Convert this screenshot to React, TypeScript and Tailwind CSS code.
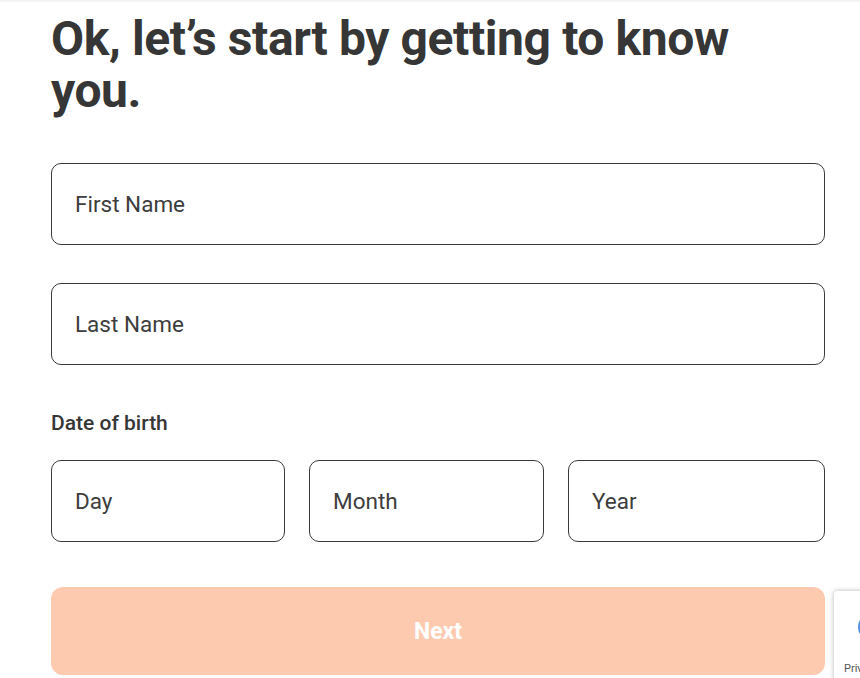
import React from "react";

function Field({ label, className = "" }: { label: string; className?: string }) {
  return (
    <div
      className={`h-[82px] rounded-[10px] border border-[#3a3a3a] bg-white flex items-center pl-[23px] ${className}`}
    >
      <span className="text-[22.5px] text-[#3d3d3d] leading-none">{label}</span>
    </div>
  );
}

export default function App() {
  return (
    <div
      className="relative w-[860px] h-[678px] overflow-hidden bg-white"
      style={{ fontFamily: "Roboto, 'Noto Sans', sans-serif" }}
    >
      <div className="absolute left-0 top-0 w-full h-[3px] bg-gradient-to-b from-[#f0f0f0] to-white" />
      <div className="pl-[51px] w-[825px] pt-[13px]">
        <h1 className="w-[740px] text-[48px] leading-[52px] font-bold text-[#363636] tracking-[-0.4px]">
          Ok, let’s start by getting to know you.
        </h1>
        <div className="mt-[46px] flex flex-col gap-[38px]">
          <Field label="First Name" />
          <Field label="Last Name" />
        </div>
        <div className="mt-[49px] text-[21px] font-medium text-[#363636] leading-[19px]">
          Date of birth
        </div>
        <div className="mt-[27px] flex gap-[24px]">
          <Field label="Day" className="w-[234px]" />
          <Field label="Month" className="w-[235px]" />
          <Field label="Year" className="flex-1" />
        </div>
        <button className="mt-[45px] w-full h-[88px] rounded-[12px] bg-[#fdcab0] flex items-center justify-center pt-[3px]">
          <span className="text-[23px] font-bold text-white">Next</span>
        </button>
      </div>
      <div className="absolute left-[834px] top-[591px] w-[256px] h-[100px] bg-white rounded-[3px] shadow-[0_0_5px_rgba(0,0,0,0.3)]">
        <div className="absolute left-[24px] top-[22px] w-[28px] h-[28px] rounded-full border-[5px] border-[#4a90e2]" />
        <div className="absolute left-[10px] top-[72px] text-[11px] text-[#555] leading-none whitespace-nowrap">
          Privacy - Terms
        </div>
      </div>
    </div>
  );
}
